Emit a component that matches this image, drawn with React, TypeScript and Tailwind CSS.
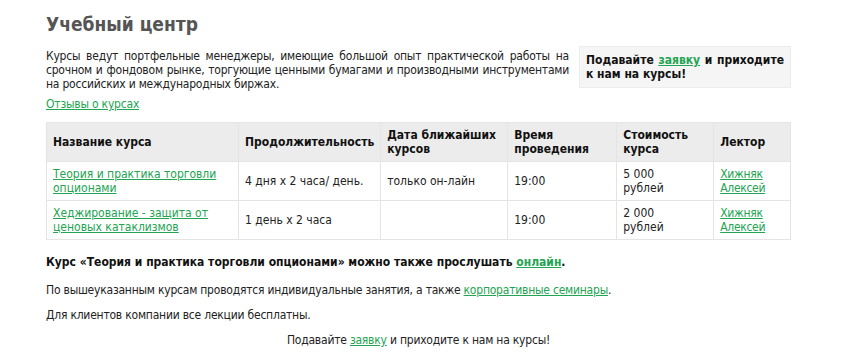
const link = 'text-[#22a452] underline';

const rows = [
  {
    name: 'Теория и практика торговли опционами',
    duration: '4 дня х 2 часа/ день.',
    date: 'только он-лайн',
    time: '19:00',
    price: ['5 000', 'рублей'],
  },
  {
    name: 'Хеджирование - защита от ценовых катаклизмов',
    duration: '1 день х 2 часа',
    date: '',
    time: '19:00',
    price: ['2 000', 'рублей'],
  },
];

export default function App() {
  return (
    <div
      className="min-h-[359px] bg-white text-[12px] leading-[14px] text-[#222]"
      style={{ fontFamily: '"DejaVu Sans Condensed", Tahoma, "DejaVu Sans", sans-serif' }}
    >
      <div className="w-[745px] ml-[46px] pt-[13px]">
        <h1 className="text-[19px] leading-[22px] font-bold text-[#555]">Учебный центр</h1>

        <div className="mt-[14px] flex items-start gap-[10px]">
          <p className="w-[523px] tracking-[-0.22px] text-justify [text-align-last:left]">
            Курсы ведут портфельные менеджеры, имеющие большой опыт практической работы на срочном и
            фондовом рынке, торгующие ценными бумагами и производными инструментами на российских и
            международных биржах.
          </p>
          <div className="flex-1 -mt-[3px] bg-[#f5f5f5] border border-[#ececec] px-[6px] pt-[6px] pb-[6px] font-bold text-[#111] text-justify [text-align-last:left]">
            Подавайте <a className={link}>заявку</a> и приходите к нам на курсы!
          </div>
        </div>

        <p className="mt-[6px] tracking-[-0.2px]">
          <a className={link}>Отзывы о курсах</a>
        </p>

        <table className="mt-[11px] w-full border-collapse border border-[#e4e4e4]">
          <thead>
            <tr className="bg-[#ececec] h-[39px] text-left font-bold text-[#111]">
              <th className="w-[192px] px-[6px] border border-[#e4e4e4]">Название курса</th>
              <th className="w-[138px] px-[6px] border border-[#e4e4e4]">Продолжительность</th>
              <th className="w-[127px] px-[6px] border border-[#e4e4e4]">Дата ближайших курсов</th>
              <th className="w-[109px] px-[6px] border border-[#e4e4e4]">Время проведения</th>
              <th className="w-[97px] px-[6px] border border-[#e4e4e4]">Стоимость курса</th>
              <th className="px-[6px] border border-[#e4e4e4]">Лектор</th>
            </tr>
          </thead>
          <tbody>
            {rows.map((r) => (
              <tr key={r.name} className="h-[39px]">
                <td className="px-[6px] border border-[#e4e4e4]">
                  <a className={link}>{r.name}</a>
                </td>
                <td className="px-[6px] border border-[#e4e4e4]">{r.duration}</td>
                <td className="px-[6px] border border-[#e4e4e4]">{r.date}</td>
                <td className="px-[6px] border border-[#e4e4e4]">{r.time}</td>
                <td className="px-[6px] border border-[#e4e4e4]">
                  {r.price[0]}
                  <br />
                  {r.price[1]}
                </td>
                <td className="px-[6px] border border-[#e4e4e4] tracking-[-0.3px]">
                  <a className={link}>
                    Хижняк
                    <br />
                    Алексей
                  </a>
                </td>
              </tr>
            ))}
          </tbody>
        </table>

        <p className="mt-[15px] font-bold text-[#111]">
          Курс «Теория и практика торговли опционами» можно также прослушать{' '}
          <a className={link}>онлайн</a>.
        </p>
        <p className="mt-[14px] tracking-[-0.22px]">
          По вышеуказанным курсам проводятся индивидуальные занятия, а также{' '}
          <a className={link}>корпоративные семинары</a>.
        </p>
        <p className="mt-[11px] tracking-[-0.22px]">Для клиентов компании все лекции бесплатны.</p>
        <p className="mt-[11px] tracking-[-0.22px] text-center">
          Подавайте <a className={link}>заявку</a> и приходите к нам на курсы!
        </p>
      </div>
    </div>
  );
}
